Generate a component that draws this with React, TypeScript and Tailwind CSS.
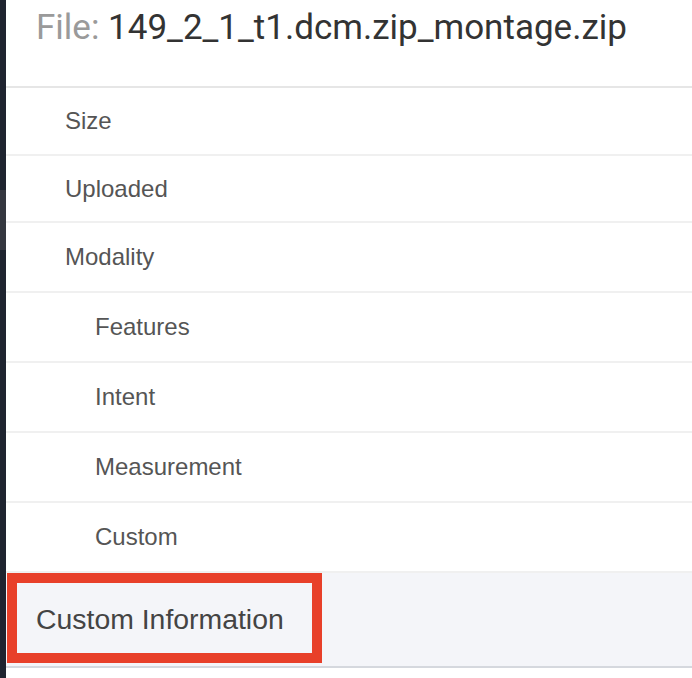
import React from 'react';

// heights include the 2px bottom border (border-box)
const rows: { label: string; indent: boolean; h: string }[] = [
  { label: 'Size', indent: false, h: 'h-[68px]' },
  { label: 'Uploaded', indent: false, h: 'h-[67px]' },
  { label: 'Modality', indent: false, h: 'h-[70px]' },
  { label: 'Features', indent: true, h: 'h-[70px]' },
  { label: 'Intent', indent: true, h: 'h-[70px]' },
  { label: 'Measurement', indent: true, h: 'h-[70px]' },
  { label: 'Custom', indent: true, h: 'h-[70px]' },
];

export default function App() {
  return (
    <div className="relative flex h-[678px] w-[692px] overflow-hidden bg-white">
      {/* sidebar edge */}
      <div className="flex w-[6px] shrink-0 flex-col bg-[#1f2430]">
        <div className="h-[190px]" />
        <div className="h-[60px] bg-[#34373f]" />
      </div>

      <div className="flex min-w-0 flex-1 flex-col">
        <div
          className="h-[88px] shrink-0 whitespace-nowrap border-b-2 border-[#e6e6e6] pl-[30px] pt-[7px] text-[35px] leading-[normal]"
          style={{ fontFamily: 'Roboto, sans-serif' }}
        >
          <span className="text-[#9a9a9a]">File:</span>{' '}
          <span className="text-[#333333]">149_2_1_t1.dcm.zip_montage.zip</span>
        </div>

        {rows.map((r) => (
          <div
            key={r.label}
            className={`flex shrink-0 items-center border-b-2 border-[#f0f0f0] text-[24px] text-[#555555] ${r.h} ${r.indent ? 'pl-[89px]' : 'pl-[59px]'}`}
            style={{ fontFamily: '"Liberation Sans", Arial, sans-serif' }}
          >
            {r.label}
          </div>
        ))}

        <div
          className="flex h-[95px] shrink-0 items-center border-b-2 border-[#d5d8de] bg-[#f4f5f9] pl-[30px] text-[28.4px] text-[#444444]"
          style={{ fontFamily: '"Liberation Sans", Arial, sans-serif' }}
        >
          Custom Information
        </div>
      </div>

      {/* annotation box */}
      <div className="pointer-events-none absolute left-[7px] top-[573px] h-[90px] w-[315px] border-[10px] border-[#e8402a]" />
    </div>
  );
}
